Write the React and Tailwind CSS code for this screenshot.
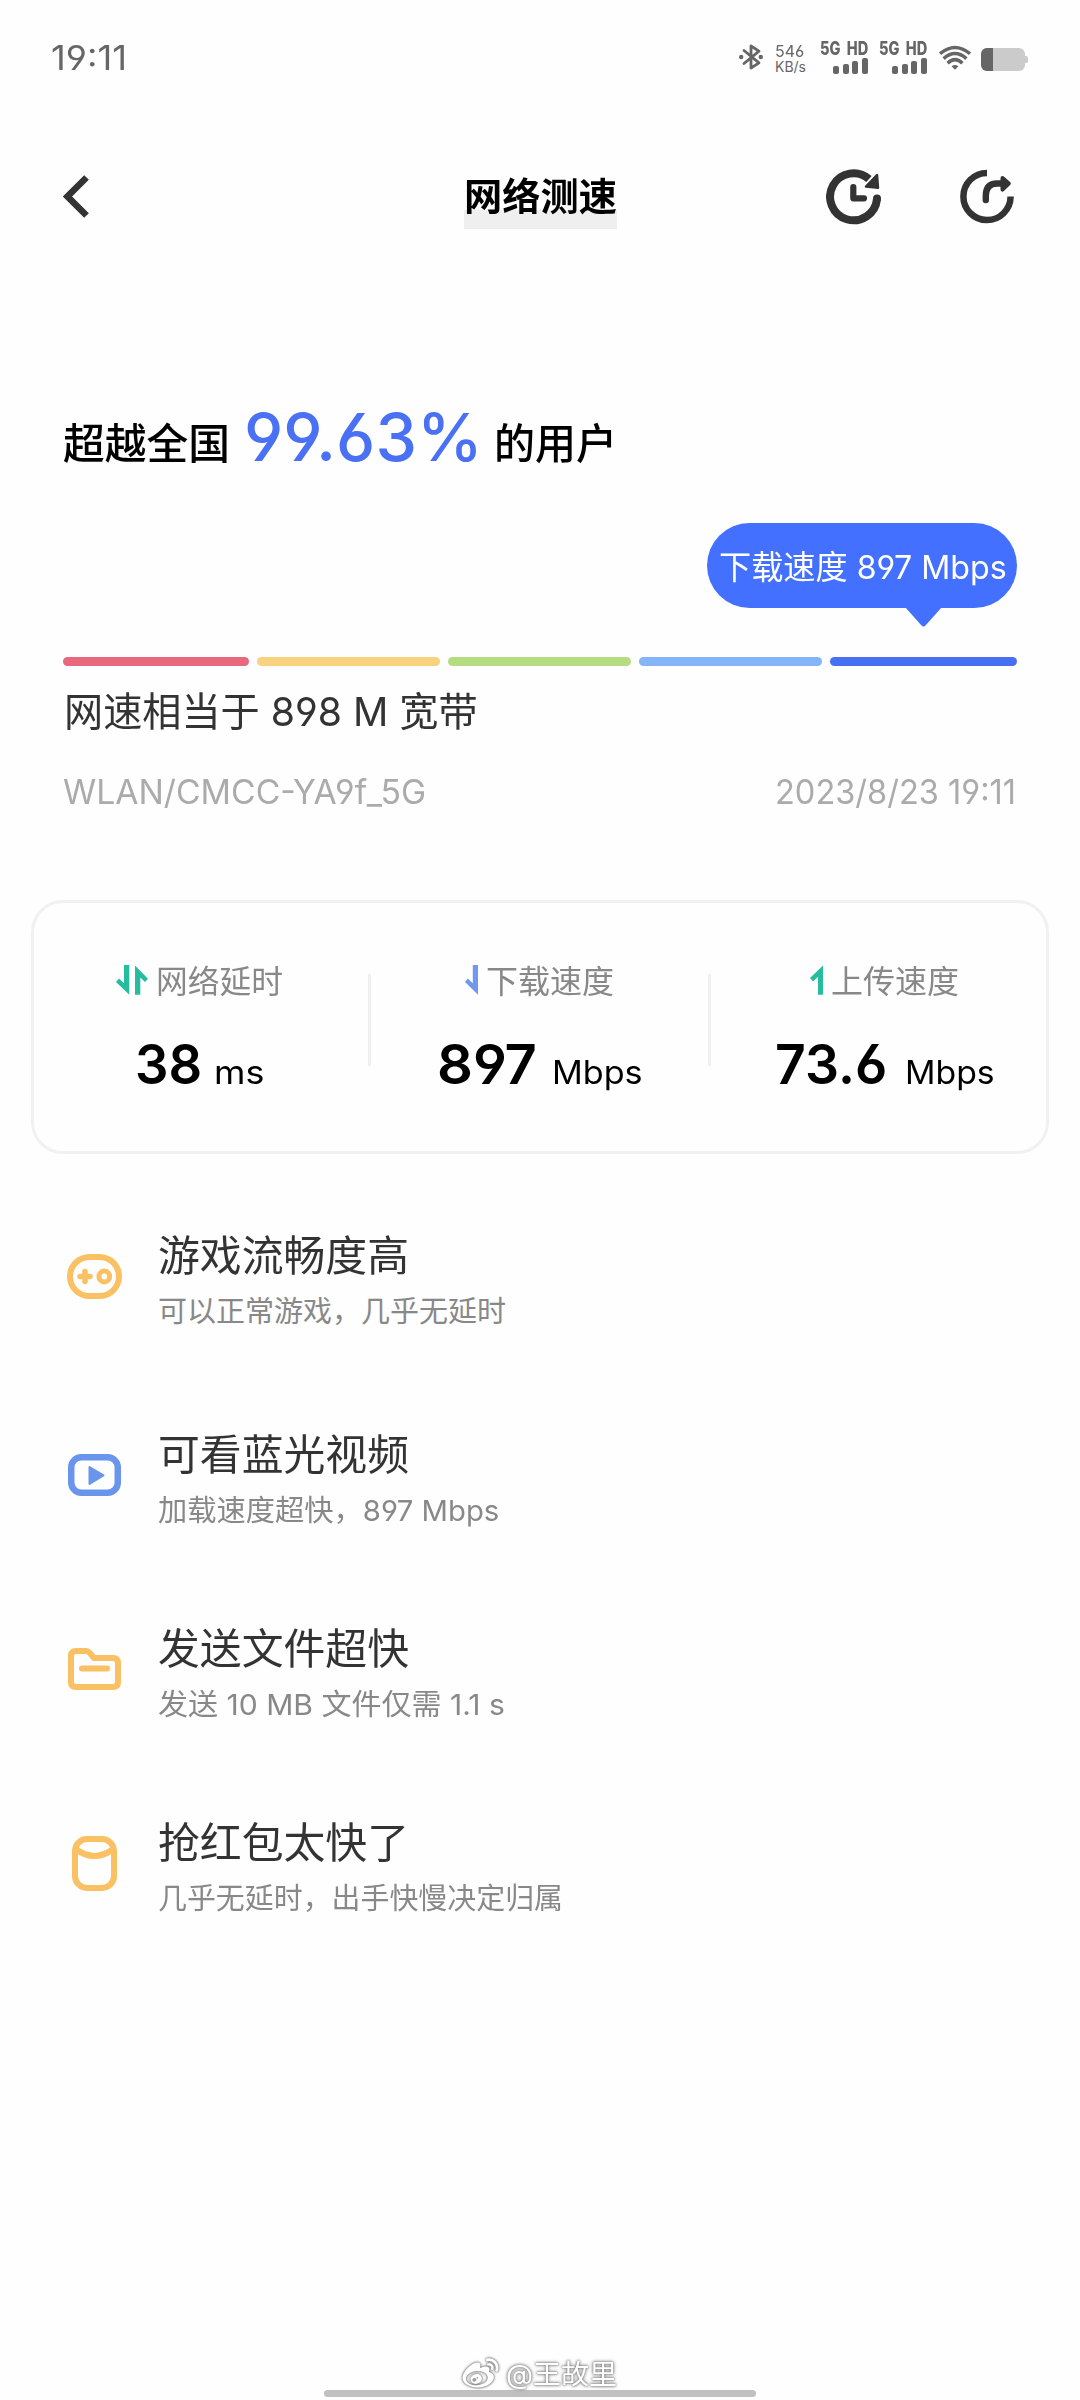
import React, { useLayoutEffect, useRef, useState } from 'react';
import { FaWeibo } from 'react-icons/fa';

// Squeezes or stretches one line of text to the width of its box
const FitText = ({ className = '', children }) => {
  const box = useRef(null);
  const line = useRef(null);
  const [ratio, setRatio] = useState(1);

  useLayoutEffect(() => {
    setRatio(box.current.clientWidth / line.current.offsetWidth);
  }, [children]);

  return (
    <span ref={box} className={`inline-block whitespace-nowrap ${className}`}>
      <span ref={line} className="inline-block origin-left" style={{ transform: `scaleX(${ratio})` }}>
        {children}
      </span>
    </span>
  );
};

const BluetoothIcon = () => (
  <svg width="24" height="26" viewBox="0 0 24 26" fill="none">
    <path d="M5 6.5L20 18.8L12 24V2L20 7.2L5 19.5" stroke="#666" strokeWidth="2.8" strokeLinejoin="round" strokeLinecap="round" />
    <circle cx="2.2" cy="13" r="2.2" fill="#666" />
    <circle cx="21.8" cy="13" r="2.2" fill="#666" />
  </svg>
);

const Signal = () => (
  <div className="flex flex-col items-end w-12 h-[33px]">
    <FitText className="w-12 h-[14px] leading-[14px] text-[18.5px] font-extrabold [word-spacing:4px]">5G HD</FitText>
    <div className="flex items-end gap-[3.6px] mt-[3px] h-4">
      <div className="w-1.5 h-2 rounded-[2px] bg-[#666]"></div>
      <div className="w-1.5 h-2.5 rounded-[2px] bg-[#666]"></div>
      <div className="w-1.5 h-[13px] rounded-[2px] bg-[#666]"></div>
      <div className="w-1.5 h-4 rounded-[2px] bg-[#666]"></div>
    </div>
  </div>
);

const WifiIcon = () => (
  <svg width="32" height="26" viewBox="0 0 32 26" fill="none" stroke="#666" strokeWidth="3.4">
    <path d="M1 8.6Q16 -3.8 31 8.6" />
    <path d="M4.6 13.6Q16 3.6 27.4 13.6" />
    <path d="M8.6 18.2Q16 11 23.4 18.2" />
    <path d="M12.6 21.2Q16 18.6 19.4 21.2L16 24.8Z" fill="#666" stroke="none" />
  </svg>
);

const HistoryIcon = () => (
  <svg width="56" height="56" viewBox="0 0 56 56" fill="none" stroke="#333">
    <path d="M51 30A23.5 23.5 0 1 1 43 10" strokeWidth="8" />
    <circle cx="51" cy="29.5" r="4" fill="#333" stroke="none" />
    <path d="M51 6L52 18.8L40 17.6Z" fill="#333" strokeWidth="2.5" strokeLinejoin="round" />
    <path d="M27.3 18V29.3H38" strokeWidth="6.2" strokeLinecap="round" strokeLinejoin="round" />
  </svg>
);

const ShareIcon = () => (
  <svg width="56" height="56" viewBox="0 0 56 56" fill="none" stroke="#333">
    <path d="M50.6 27.6A23.6 23.6 0 1 1 27 3.9" strokeWidth="6.5" />
    <path d="M25.8 31V27C25.8 18 30 14.5 37 14.5H42" strokeWidth="6.4" strokeLinecap="round" />
    <path d="M42.5 9L48.8 14.6L42.5 20.6Z" fill="#333" strokeWidth="4" strokeLinejoin="round" />
  </svg>
);

const LatencyIcon = () => (
  <svg width="32" height="30" viewBox="0 0 32 30" fill="#26bc9f">
    <path d="M8 0H13.3V29.7L0 17L3 13.4L8 18.2Z" />
    <path d="M19 29.7V0.5L32 13.7L29 17.1L24.3 12.5V29.7Z" />
  </svg>
);

const DownIcon = () => (
  <svg width="13" height="30" viewBox="0 0 13 30" fill="#7099ee">
    <path d="M7.8 0H13V29.7L0 17L2.8 13.4L7.8 18.2Z" />
  </svg>
);

const UpIcon = () => (
  <svg width="13" height="30" viewBox="0 0 13 30" fill="#26bc9f">
    <path d="M13 29.7V0.4L0 13L3 16.4L8 11.8V29.7Z" />
  </svg>
);

const GameIcon = () => (
  <svg width="55" height="45" viewBox="0 0 55 45" fill="none" stroke="#fac064">
    <rect x="3" y="3" width="49" height="39" rx="19.5" strokeWidth="6" />
    <path d="M13 22.5H23M18 17.5V27.5" strokeWidth="5.6" strokeLinecap="round" />
    <circle cx="37.3" cy="22.5" r="5.4" strokeWidth="5" />
  </svg>
);

const VideoIcon = () => (
  <svg width="53" height="42" viewBox="0 0 53 42" fill="none" stroke="#6a95ec">
    <rect x="3.25" y="3.25" width="46.5" height="35.5" rx="10" strokeWidth="6.5" />
    <path d="M21.5 13L35.5 21.3L21.5 30Z" fill="#6a95ec" strokeWidth="2" strokeLinejoin="round" />
  </svg>
);

const FolderIcon = () => (
  <svg width="53" height="42" viewBox="0 0 53 42" fill="none" stroke="#fac064" strokeWidth="6">
    <path d="M3 8Q3 3 8 3H18Q20 3 21.5 4.6L26 10H45Q50 10 50 15V34Q50 39 45 39H8Q3 39 3 34Z" strokeLinejoin="round" />
    <path d="M14 20.5H39" strokeLinecap="round" />
  </svg>
);

const PacketIcon = () => (
  <svg width="45" height="55" viewBox="0 0 45 55" fill="none" stroke="#fac064" strokeWidth="6">
    <rect x="3" y="3" width="39" height="49" rx="12" />
    <path d="M3 12.5Q22.5 27.5 42 12.5" />
  </svg>
);

const tips = [
  { icon: <GameIcon />, title: '游戏流畅度高', text: '可以正常游戏，几乎无延时', width: 'w-[348px]', space: 'mt-[71px]' },
  { icon: <VideoIcon />, title: '可看蓝光视频', text: '加载速度超快，897 Mbps', width: 'w-[341px]', space: 'mt-[94px]' },
  { icon: <FolderIcon />, title: '发送文件超快', text: '发送 10 MB 文件仅需 1.1 s', width: 'w-[347px]', space: 'mt-[89px]' },
  { icon: <PacketIcon />, title: '抢红包太快了', text: '几乎无延时，出手快慢决定归属', width: 'w-[405px]', space: 'mt-[89px]' },
];

const App = () => {
  return (
    <div
      className="w-[1080px] h-[2400px] flex flex-col overflow-hidden bg-[#fefefe] text-black font-['Inter','Noto_Sans_CJK_SC',sans-serif] [font-feature-settings:'cv03','cv04']"
    >
      {/* Status bar */}
      <div className="flex items-center h-[114px] pl-[51px] pr-[52px] text-[#666]">
        <FitText className="w-[76px] mt-0.5 text-[33.5px] leading-[40px]">19:11</FitText>
        <div className="flex items-center ml-auto">
          <BluetoothIcon />
          <div className="flex flex-col w-8 ml-3 mt-1">
            <FitText className="w-[29px] h-[15px] text-[16.5px] leading-[15px]">546</FitText>
            <FitText className="w-[31px] h-[15px] text-[14px] leading-[15px]">KB/s</FitText>
          </div>
          <div className="flex gap-[11px] ml-[13px]">
            <Signal />
            <Signal />
          </div>
          <div className="ml-3 mt-0.5">
            <WifiIcon />
          </div>
          <div className="flex items-center ml-2.5 mt-1">
            <div className="w-11 h-[23px] rounded-md bg-[#cbcbcb] overflow-hidden">
              <div className="w-3 h-full bg-[#666]"></div>
            </div>
            <div className="w-[3px] h-[7px] rounded-r-[2px] bg-[#cbcbcb]"></div>
          </div>
        </div>
      </div>

      {/* Title bar */}
      <div className="flex items-center h-[165px] pl-[63px] pr-[64px]">
        <svg width="27" height="43" viewBox="0 0 27 43" fill="none">
          <path d="M23.5 2.5L4.5 21.5L23.5 40.5" stroke="#333" strokeWidth="6.6" />
        </svg>
        <h1 className="w-[153px] h-[64px] ml-[374px] mr-auto bg-linear-to-b from-transparent from-[70%] to-[#efefef] to-[70%]">
          <FitText className="w-[153px] text-[38px] leading-[62px] font-semibold">网络测速</FitText>
        </h1>
        <div className="flex gap-[78px]">
          <HistoryIcon />
          <ShareIcon />
        </div>
      </div>

      {/* Ranking */}
      <div className="flex items-baseline h-20 mt-[118px] pl-[63px] text-[42px] leading-[60px] font-medium">
        <FitText className="relative -top-0.5 w-[167px]">超越全国</FitText>
        <FitText className="w-[239px] ml-[14px] text-[66px] leading-[80px] text-[#4a70f4]">99.63%</FitText>
        <FitText className="relative -top-0.5 w-[123px] ml-[11px]">的用户</FitText>
      </div>

      {/* Download bubble */}
      <div className="relative self-end w-[310px] h-[85px] mt-[46px] mr-[63px] pl-3 rounded-full bg-[#4470ff] text-white">
        <FitText className="w-[288px] text-[32.5px] leading-[89px]">下载速度 897 Mbps</FitText>
        <svg className="absolute left-[198px] top-[84px]" width="37" height="20" viewBox="0 0 37 20" fill="#4470ff">
          <path d="M0 0H37L20.5 18.4Q18.5 20.4 16.5 18.4Z" />
        </svg>
      </div>

      {/* Speed scale */}
      <div className="flex gap-2 h-[9px] mt-[49px] px-[63px]">
        <div className="w-[186px] rounded-full bg-[#e9687e]"></div>
        <div className="w-[183px] rounded-full bg-[#f8d27e]"></div>
        <div className="w-[183px] rounded-full bg-[#b5dc80]"></div>
        <div className="w-[183px] rounded-full bg-[#84b5f8]"></div>
        <div className="w-[187px] rounded-full bg-[#476ff2]"></div>
      </div>

      <div className="mt-4 h-[60px] pl-[64px] text-[#333]">
        <FitText className="w-[414px] text-[40px] leading-[60px]">网速相当于 898 M 宽带</FitText>
      </div>
      <div className="flex justify-between mt-[30px] h-10 pl-[63px] pr-[64px] text-[33.5px] leading-10 text-[#ababab]">
        <FitText className="w-[363px]">WLAN/CMCC-YA9f_5G</FitText>
        <FitText className="w-[241px]">2023/8/23 19:11</FitText>
      </div>

      {/* Results */}
      <div className="flex mt-[88px] mx-[31px] h-[254px] rounded-[32px] border-[3px] border-[#f1f1f1]">
        <div className="w-[334px] pt-[57px]">
          <div className="flex items-center h-10 pl-[82px] text-[31.5px] leading-10 text-[#888]">
            <LatencyIcon />
            <FitText className="w-[127px] ml-2 mt-[3px]">网络延时</FitText>
          </div>
          <div className="flex items-baseline mt-8 pl-[101px] leading-[64px]">
            <FitText className="w-[67px] text-[55px] font-semibold">38</FitText>
            <FitText className="w-[50px] ml-[12px] text-[33px]">ms</FitText>
          </div>
        </div>
        <div className="w-[3px] h-[92px] mt-[71px] bg-[#f0f0f0]"></div>
        <div className="w-[337px] pt-[57px]">
          <div className="flex items-center h-10 pl-[94px] text-[31.5px] leading-10 text-[#888]">
            <DownIcon />
            <FitText className="w-[128px] ml-2 mt-[3px]">下载速度</FitText>
          </div>
          <div className="flex items-baseline mt-8 pl-[66px] leading-[64px]">
            <FitText className="w-[100px] text-[55px] font-semibold">897</FitText>
            <FitText className="w-[91px] ml-[15px] text-[33px]">Mbps</FitText>
          </div>
        </div>
        <div className="w-[3px] h-[92px] mt-[71px] bg-[#f0f0f0]"></div>
        <div className="pt-[57px]">
          <div className="flex items-center h-10 pl-[99px] text-[31.5px] leading-10 text-[#888]">
            <UpIcon />
            <FitText className="w-[128px] ml-2 mt-[3px]">上传速度</FitText>
          </div>
          <div className="flex items-baseline mt-8 pl-[64px] leading-[64px]">
            <FitText className="w-[112px] text-[55px] font-semibold">73.6</FitText>
            <FitText className="w-[90px] ml-[18px] text-[33px]">Mbps</FitText>
          </div>
        </div>
      </div>

      {/* What the speed is good for */}
      {tips.map((tip) => (
        <div key={tip.title} className={`flex items-center h-[105px] pl-[67px] ${tip.space}`}>
          <div className="flex justify-center w-[55px] mb-[3px]">{tip.icon}</div>
          <div className="flex flex-col ml-9 mt-[3px]">
            <FitText className="w-[251px] h-[60px] text-[41.5px] leading-[60px] text-[#333]">{tip.title}</FitText>
            <FitText className={`h-10 mt-[6px] text-[29px] leading-10 text-[#888] ${tip.width}`}>{tip.text}</FitText>
          </div>
        </div>
      ))}

      {/* Watermark and home indicator */}
      <div className="flex flex-col items-center mt-auto pb-[3px]">
        <div className="flex items-center gap-[6px] h-[33px] text-white">
          <FaWeibo className="w-[39px] h-[36px] [filter:drop-shadow(0_0_1px_#777)_drop-shadow(0_0_1px_#999)]" />
          <FitText className="w-[111px] mt-0.5 mr-[2px] text-[27px] leading-[34px] [text-shadow:0_0_2px_#777,0_0_3px_#888,0_0_4px_#aaa]">@王故里</FitText>
        </div>
        <div className="w-[432px] h-[7px] rounded-full bg-[#c0c0c0]"></div>
      </div>
    </div>
  );
};

export default App;
